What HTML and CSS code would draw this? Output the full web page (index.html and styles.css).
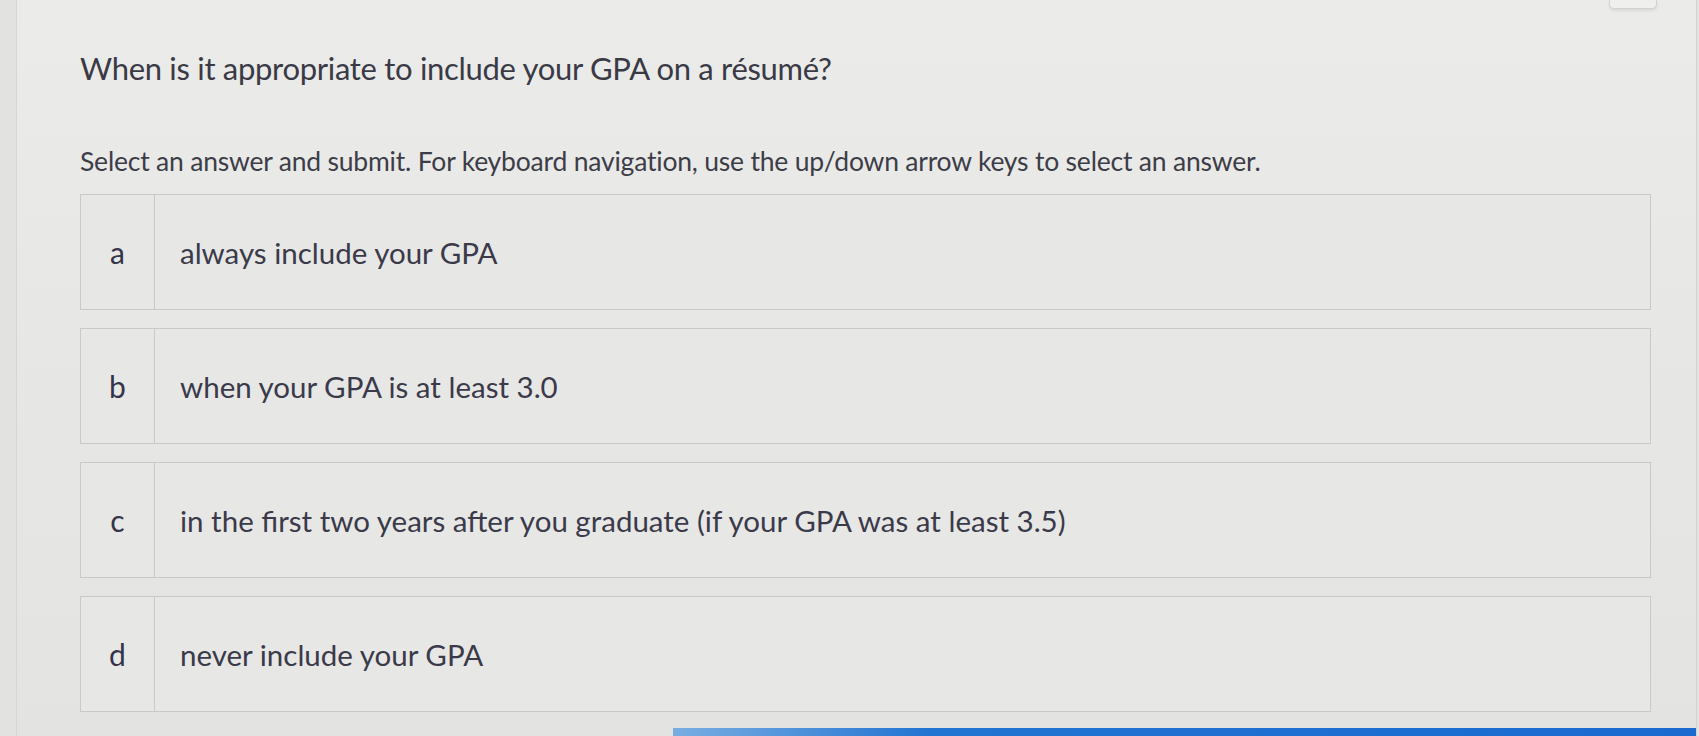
FILE: index.html
```html
<!DOCTYPE html>
<html lang="en">
<head>
    <meta charset="UTF-8">
    <meta name="viewport" content="width=device-width, initial-scale=1.0">
    <title>Question - GPA on a résumé</title>
    <link rel="stylesheet" href="styles.css">
</head>
<body>

    <div class="page">
        <div class="panel">
            <div class="toolbar"><span class="tool-btn"></span></div>

            <h1 class="question">When is it appropriate to include your GPA on a résumé?</h1>
            <p class="hint">Select an answer and submit. For keyboard navigation, use the up/down arrow keys to select an answer.</p>

            <!-- Answer choices -->
            <div class="choices" role="radiogroup">
                <div class="choice" role="radio" tabindex="0">
                    <span class="choice-key">a</span>
                    <span class="choice-text">always include your GPA</span>
                </div>
                <div class="choice" role="radio" tabindex="-1">
                    <span class="choice-key">b</span>
                    <span class="choice-text">when your GPA is at least 3.0</span>
                </div>
                <div class="choice" role="radio" tabindex="-1">
                    <span class="choice-key">c</span>
                    <span class="choice-text">in the first two years after you graduate (if your GPA was at least 3.5)</span>
                </div>
                <div class="choice" role="radio" tabindex="-1">
                    <span class="choice-key">d</span>
                    <span class="choice-text">never include your GPA</span>
                </div>
            </div>

            <div class="footer-bar"></div>
        </div>
    </div>

</body>
</html>
```

FILE: styles.css
```css
body { margin: 0; font-family: Lato, "Open Sans", sans-serif; color: #3d3d4a; background: #e2e2e0; overflow: hidden; }
.page { height: 736px; padding-left: 16px; }
.panel {
    height: 736px; margin-right: 2px; padding: 0 45px 0 63px;
    background: linear-gradient(180deg, #ebebe9, #e6e6e4 60%, #e3e3e1);
    border-left: 1px solid #d6d6d4; border-right: 1px solid #d3d3d1;
    display: flex; flex-direction: column;
}
.toolbar { height: 8px; display: flex; justify-content: flex-end; margin-right: -6px; }
.tool-btn {
    width: 46px; height: 8px; background: #efefed;
    border: 1px solid #d2d2d0; border-top: none; border-radius: 0 0 5px 5px;
    box-shadow: 0 2px 3px rgba(0, 0, 0, 0.08);
}
.question {
    margin: 40px 0 0; font-size: 31px; font-weight: 400; line-height: 40px;
    letter-spacing: -0.3px; color: #3a3a46;
}
.hint { margin: 56px 0 0; font-size: 26.5px; line-height: 34px; letter-spacing: -0.2px; color: #3d3d48; }
.choices { margin-top: 16px; display: flex; flex-direction: column; gap: 18px; }
.choice {
    height: 114px; display: flex; align-items: stretch;
    border: 1px solid #c9c9c7; background: #e7e7e5;
}
.choice-key {
    width: 73px; border-right: 1px solid #c9c9c7;
    display: flex; align-items: center; justify-content: center;
    font-size: 30px; color: #34344a;
}
.choice-text {
    display: flex; align-items: center; padding-left: 25px;
    font-size: 29.5px; color: #3a3a4a;
}
.footer-bar {
    margin-top: auto; margin-left: 593px; margin-right: -45px; height: 8px;
    background: linear-gradient(90deg, #7aaee2, #2274d2 25%, #1a6ad0);
}
```
